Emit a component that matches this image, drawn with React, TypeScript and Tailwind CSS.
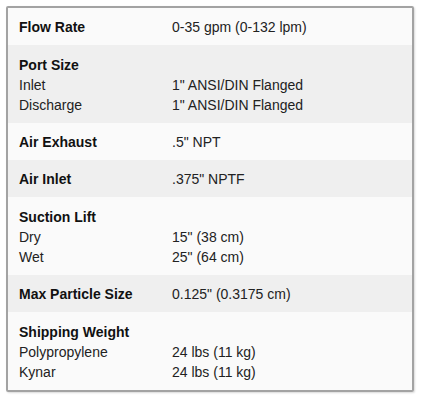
import React from "react";

interface SpecRow {
  title: string;
  value?: string;
  items?: [string, string][];
}

const specs: SpecRow[] = [
  { title: "Flow Rate", value: "0-35 gpm (0-132 lpm)" },
  {
    title: "Port Size",
    items: [
      ["Inlet", '1" ANSI/DIN Flanged'],
      ["Discharge", '1" ANSI/DIN Flanged'],
    ],
  },
  { title: "Air Exhaust", value: '.5" NPT' },
  { title: "Air Inlet", value: '.375" NPTF' },
  {
    title: "Suction Lift",
    items: [
      ["Dry", '15" (38 cm)'],
      ["Wet", '25" (64 cm)'],
    ],
  },
  { title: "Max Particle Size", value: '0.125" (0.3175 cm)' },
  {
    title: "Shipping Weight",
    items: [
      ["Polypropylene", "24 lbs (11 kg)"],
      ["Kynar", "24 lbs (11 kg)"],
    ],
  },
];

export default function App() {
  return (
    <div className="min-h-[400px] bg-white p-[6px] font-['Liberation_Sans',Arial,sans-serif] text-[14px]">
      <div className="w-[408px] overflow-hidden rounded-[2px] border-2 border-[#a3a3a3] shadow-[1px_1px_2px_rgba(0,0,0,0.15)]">
        {specs.map((row, i) => (
          <div
            key={row.title}
            className={`px-[11px] pt-[10px] pb-[8px] ${i % 2 === 0 ? "bg-[#fafafa]" : "bg-[#efefef]"} ${
              row.items ? "leading-5" : "leading-[19px]"
            }`}
          >
            <div className="flex">
              <div className="w-[153px] font-bold text-[#111]">{row.title}</div>
              {row.value && <div className="text-[#222]">{row.value}</div>}
            </div>
            {row.items?.map(([k, v]) => (
              <div key={k} className="flex text-[#222]">
                <div className="w-[153px]">{k}</div>
                <div>{v}</div>
              </div>
            ))}
          </div>
        ))}
      </div>
    </div>
  );
}
